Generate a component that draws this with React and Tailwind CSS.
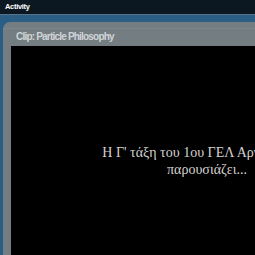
import React from "react";

const App = () => {
  return (
    <div className="w-[255px] h-[255px] overflow-hidden bg-[#0b1821] font-['Liberation_Sans',Arial,sans-serif]">
      {/* Top bar */}
      <div className="h-[14px] pl-[5px] pt-[3px] text-[7.5px] leading-[8px] font-bold tracking-[-0.3px] text-white">
        Activity
      </div>

      {/* Blue frame */}
      <div className="h-[241px] border-t border-[#56738a] bg-[#2a5e85] pt-[7px] pl-[3px]">
        <div className="h-full w-[420px] rounded-tl-[7px] bg-[#737d82]">
          {/* Header */}
          <div className="h-[7px] border-b border-[#7b8589]" />
          <div className="h-[17px] pl-[13px] pt-[2px] text-[10px] leading-[11px] font-bold tracking-[-0.8px] text-[#d0d4d7]">
            Clip: Particle Philosophy
          </div>

          {/* Video */}
          <div className="ml-[8px] h-[300px] w-[392px] bg-black pt-[98px] text-center font-['Liberation_Serif','DejaVu_Serif',serif] text-[14px] leading-[17px] text-[#d4d2cf]">
            <p>Η Γ' τάξη του 1ου ΓΕΛ Αργοστολίου</p>
            <p>παρουσιάζει...</p>
          </div>
        </div>
      </div>
    </div>
  );
};

export default App;
